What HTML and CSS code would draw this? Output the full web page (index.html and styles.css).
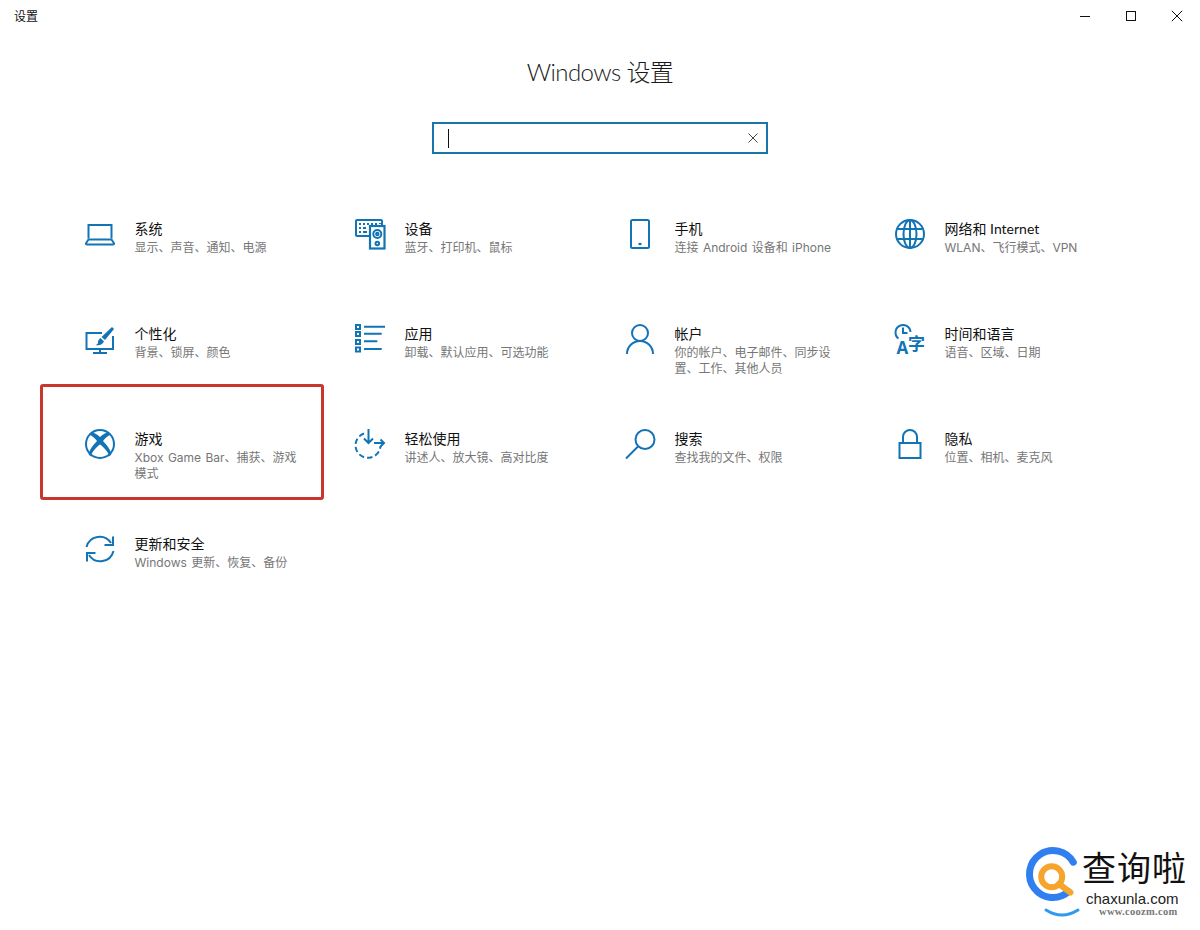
FILE: index.html
```html
<!DOCTYPE html>
<html lang="zh-CN">
<head>
<meta charset="utf-8">
<title>设置</title>
<link rel="stylesheet" href="styles.css">
</head>
<body>
<header class="titlebar">
  <span class="app-name">设置</span>
  <div class="controls">
    <span class="ctl"><svg width="12" height="12" viewBox="0 0 12 12"><path d="M1 6.5h10" class="ctl-line"/></svg></span>
    <span class="ctl"><svg width="12" height="12" viewBox="0 0 12 12"><rect x="1.5" y="1.5" width="9" height="9" class="ctl-line"/></svg></span>
    <span class="ctl"><svg width="12" height="12" viewBox="0 0 12 12"><path d="M.8 .8l10.4 10.4M11.2 .8L.8 11.2" class="ctl-line"/></svg></span>
  </div>
</header>

<main class="page">
  <h1 class="heading">Windows 设置</h1>
  <div class="search">
    <span class="caret"></span>
    <svg class="clear" width="10" height="10" viewBox="0 0 10 10"><path d="M.5 .5l9 9M9.5 .5l-9 9"/></svg>
  </div>

  <section class="grid">
    <article class="tile">
      <svg class="icon" viewBox="0 0 30 30"><path d="M3.5 19.5V6h23v13.5"/><path d="M3.5 20.5H26.5L29 24.3Q29.3 25.5 28 25.5H2Q.7 25.5 1 24.3Z"/></svg>
      <div class="tile-text"><h2>系统</h2><p>显示、声音、通知、电源</p></div>
    </article>
    <article class="tile">
      <svg class="icon" viewBox="0 0 30 30"><path d="M14 17H2Q1 17 1 16V2Q1 1 2 1H26Q27 1 27 2V6"/><path class="dots" d="M4 4h2v2H4zM8 4h2v2H8zM12 4h2v2h-2zM16 4h2v2h-2zM20 4h2v2h-2zM24 4h2v1h-2zM4 8h2v2H4zM8 8h3v2H8zM4 12h2v2H4zM8 12h4v2H8z"/><rect x="15" y="7" width="14.500" height="22.500" class="heavy"/><circle cx="22.300" cy="15" r="4"/><circle cx="22.300" cy="15" r="1.200"/><circle cx="22.300" cy="24.500" r="1.800"/></svg>
      <div class="tile-text"><h2>设备</h2><p>蓝牙、打印机、鼠标</p></div>
    </article>
    <article class="tile">
      <svg class="icon" viewBox="0 0 30 30"><rect x="6" y="1" width="18" height="28" rx="1.500"/><path d="M13.500 25h3" class="heavy"/></svg>
      <div class="tile-text"><h2>手机</h2><p>连接 Android 设备和 iPhone</p></div>
    </article>
    <article class="tile">
      <svg class="icon" viewBox="0 0 30 30"><circle cx="15" cy="15" r="14"/><ellipse cx="15" cy="15" rx="6.500" ry="14"/><path d="M15 1V29M2.500 10H27.500M2.500 20H27.500"/></svg>
      <div class="tile-text"><h2>网络和 Internet</h2><p>WLAN、飞行模式、VPN</p></div>
    </article>

    <article class="tile">
      <svg class="icon" viewBox="0 0 30 30"><path d="M17 9H1.500V25H28V12"/><path d="M15 25V28.500M8 29H22"/><path class="solid" d="M27 3L29 5L20 16L16.500 13Z"/><path class="solid" d="M15.500 14L19 17.500Q17 22 10.500 21Q13.500 20 13 17.500Q13.500 15 15.500 14Z"/></svg>
      <div class="tile-text"><h2>个性化</h2><p>背景、锁屏、颜色</p></div>
    </article>
    <article class="tile">
      <svg class="icon" viewBox="0 0 30 30"><path class="solid" d="M0 0h6v6H0zM0 7h6v6H0zM0 15h6v6H0zM0 22.500h6v6H0z"/><path class="light-sq" d="M2 2h2v2H2zM2 9h2v2H2zM2 17h2v2H2zM2 24.500h2v2H2z"/><path d="M9 2.700H30M9 9.700H26.700M9 17.300H22.300M9 25H26.700"/></svg>
      <div class="tile-text"><h2>应用</h2><p>卸载、默认应用、可选功能</p></div>
    </article>
    <article class="tile">
      <svg class="icon" viewBox="0 0 30 30"><circle cx="15" cy="9" r="8"/><path d="M2 30A13 13 0 0 1 28 30"/></svg>
      <div class="tile-text"><h2>帐户</h2><p>你的帐户、电子邮件、同步设置、工作、其他人员</p></div>
    </article>
    <article class="tile">
      <svg class="icon" viewBox="0 0 30 30"><path d="M3.500 14.500A7.500 7.500 0 1 1 15.500 8"/><path d="M8 3.500V9H12.500"/><text x="1.500" y="29.500" class="glyph-a">A</text><text x="13" y="26" class="glyph-zi">字</text></svg>
      <div class="tile-text"><h2>时间和语言</h2><p>语音、区域、日期</p></div>
    </article>

    <article class="tile">
      <svg class="icon" viewBox="0 0 30 30"><circle cx="15" cy="15" r="14"/><path class="solid" d="M6 3.500C9 3.500 12.500 5.500 15 8C17.500 5.500 21 3.500 24 3.500L26 5.500C22.500 7 19.500 10 18 12C21.500 15.500 25.500 21 26.500 25L24.500 27.500C22.500 22 18 17.500 15 15.500C12 17.500 7.500 22 5.500 27.500L3.500 25C4.500 21 8.500 15.500 12 12C10.500 10 7.500 7 4 5.500Z"/></svg>
      <div class="tile-text"><h2>游戏</h2><p>Xbox Game Bar、捕获、游戏模式</p></div>
    </article>
    <article class="tile">
      <svg class="icon" viewBox="0 0 30 30"><path class="dashed" d="M9 4.500A12.500 12.500 0 1 0 25.500 17"/><path d="M13.500 0V13.500M9 9.500L13.500 14L18 9.500"/><path d="M19 14H29M25.500 10.500L29 14L25.500 17.500"/></svg>
      <div class="tile-text"><h2>轻松使用</h2><p>讲述人、放大镜、高对比度</p></div>
    </article>
    <article class="tile">
      <svg class="icon" viewBox="0 0 30 30"><circle cx="20" cy="10.500" r="9.500"/><path d="M13 17.500L1 29.500"/></svg>
      <div class="tile-text"><h2>搜索</h2><p>查找我的文件、权限</p></div>
    </article>
    <article class="tile">
      <svg class="icon" viewBox="0 0 30 30"><rect x="4.500" y="14" width="21" height="15"/><path d="M8 14V8A7 7 0 0 1 22 8V14"/></svg>
      <div class="tile-text"><h2>隐私</h2><p>位置、相机、麦克风</p></div>
    </article>

    <article class="tile">
      <svg class="icon" viewBox="0 0 30 30"><path d="M1.500 13A13.500 13.500 0 0 1 26 9"/><path d="M28 2.500V11H19.500"/><path d="M28.500 17A13.500 13.500 0 0 1 4 21"/><path d="M2 27.500V19H10.500"/></svg>
      <div class="tile-text"><h2>更新和安全</h2><p>Windows 更新、恢复、备份</p></div>
    </article>
  </section>

  <div class="highlight"></div>
</main>

<aside class="watermark">
  <svg class="wm-logo" width="58" height="78" viewBox="0 0 58 78">
    <path class="wm-blue" d="M44.500 47.700A23.500 23.500 0 1 1 49.300 18.200"/>
    <circle class="wm-orange" cx="27.700" cy="32.700" r="10.500"/>
    <path class="wm-handle" d="M35 40L46.500 48.500"/>
    <path class="wm-smile" d="M22 66Q38 76 54 66"/>
  </svg>
  <div class="wm-text">
    <div class="wm-cn">查询啦</div>
    <div class="wm-en">chaxunla.com</div>
    <div class="wm-url">www.coozm.com</div>
  </div>
</aside>
</body>
</html>
```
FILE: styles.css
```css
* { box-sizing: border-box; }
html, body { margin: 0; padding: 0; height: 100%; }
body {
  position: relative;
  background: #fff;
  overflow: hidden;
  font-family: "Open Sans", "Noto Sans CJK SC", sans-serif;
  color: #000;
}
.titlebar {
  display: flex;
  justify-content: space-between;
  align-items: center;
  height: 32px;
  padding-left: 14px;
}
.app-name { font-size: 12px; color: #111; }
.controls { display: flex; }
.ctl {
  width: 46px;
  height: 32px;
  display: flex;
  align-items: center;
  justify-content: center;
}
.ctl-line { fill: none; stroke: #111; stroke-width: 1; }

.page { position: relative; padding-top: 20px; }
.heading {
  margin: 0;
  text-align: center;
  font-family: "Lato", "Noto Sans CJK SC", sans-serif;
  font-size: 24px;
  line-height: 40px;
  font-weight: 300;
  letter-spacing: -0.6px;
  color: #1a1a1a;
}
.search {
  display: flex;
  align-items: center;
  justify-content: space-between;
  width: 336px;
  height: 32px;
  margin: 30px auto 0;
  padding: 0 8px 0 14px;
  border: 2px solid #1a74ae;
}
.caret { width: 1px; height: 19px; background: #111; }
.clear path { fill: none; stroke: #444; stroke-width: 1; }

.grid {
  display: grid;
  grid-template-columns: repeat(4, 270px);
  grid-auto-rows: 105px;
  margin-top: 65px;
  padding-left: 85px;
}
.tile { display: flex; gap: 19.5px; align-items: flex-start; }
.icon {
  flex: none;
  width: 30px;
  height: 30px;
  overflow: visible;
  fill: none;
  stroke: #1273b5;
  stroke-width: 2;
}
.icon .solid, .icon .dots { fill: #1273b5; stroke: none; }
.icon .light-sq { fill: #fff; stroke: none; }
.icon .heavy { stroke-width: 2.2; }
.icon .dashed { stroke-dasharray: 5.5 3; }
.icon text {
  fill: #1273b5;
  stroke: none;
  font-family: "Open Sans", "Noto Sans CJK SC", sans-serif;
  font-weight: 700;
}
.glyph-a { font-size: 17px; }
.glyph-zi { font-size: 17px; }
.tile-text { width: 165px; }
.tile-text h2 {
  margin: 0;
  font-family: "Lato", "Noto Sans CJK SC", sans-serif;
  font-size: 14px;
  line-height: 20px;
  font-weight: 400;
  color: #111;
}
.tile-text p {
  margin: 1px 0 0;
  font-family: "Inter", "Noto Sans CJK SC", sans-serif;
  font-size: 12px;
  line-height: 16px;
  word-spacing: 1px;
  color: #767676;
}

.highlight {
  position: absolute;
  left: 40px;
  top: 352px;
  width: 284px;
  height: 116px;
  border: 3px solid #c8372d;
  border-radius: 3px;
  pointer-events: none;
}

.watermark {
  position: absolute;
  left: 1024px;
  top: 844px;
  display: flex;
}
.wm-logo { flex: none; overflow: visible; }
.wm-blue { fill: none; stroke: #2f7ff0; stroke-width: 7; stroke-linecap: round; }
.wm-orange { fill: none; stroke: #f5a42c; stroke-width: 6; }
.wm-handle { fill: none; stroke: #f5a42c; stroke-width: 6; stroke-linecap: round; }
.wm-smile { fill: none; stroke: #2f9bf0; stroke-width: 3; stroke-linecap: round; }
.wm-text { display: flex; flex-direction: column; align-items: flex-start; }
.wm-cn {
  font-family: "Noto Sans CJK SC", serif;
  font-size: 34px;
  line-height: 45px;
  letter-spacing: 1px;
  color: #111;
  white-space: nowrap;
}
.wm-en {
  margin: 1px 0 0 4px;
  font-family: "Liberation Sans", sans-serif;
  font-size: 15px;
  line-height: 18px;
  color: #222;
  white-space: nowrap;
}
.wm-url {
  margin-left: 17px;
  font-family: "Liberation Serif", serif;
  font-size: 10.5px;
  line-height: 8px;
  font-weight: 700;
  letter-spacing: .3px;
  color: #777;
  white-space: nowrap;
}
```
